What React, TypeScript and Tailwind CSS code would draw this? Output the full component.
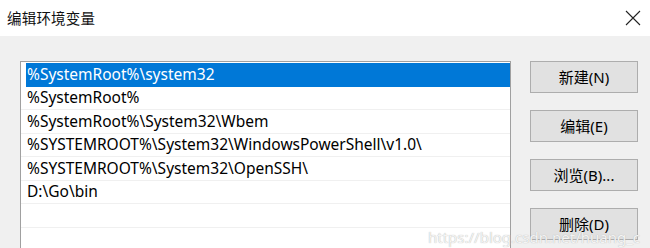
import { FC } from "react";

const paths = [
  "%SystemRoot%\\system32",
  "%SystemRoot%",
  "%SystemRoot%\\System32\\Wbem",
  "%SYSTEMROOT%\\System32\\WindowsPowerShell\\v1.0\\",
  "%SYSTEMROOT%\\System32\\OpenSSH\\",
  "D:\\Go\\bin",
  "",
  "",
];

const buttons = ["新建(N)", "编辑(E)", "浏览(B)...", "删除(D)"];

const font = { fontFamily: '"Noto Sans", "Noto Sans CJK SC", sans-serif' };

const DialogButton: FC<{ label: string }> = ({ label }) => (
  <button className="w-[108px] h-[32px] bg-[#e1e1e1] border border-[#adadad] text-[15px] text-black leading-none">
    {label}
  </button>
);

export default function App() {
  return (
    <div className="relative w-[650px] h-[248px] overflow-hidden bg-[#f0f0f0]" style={font}>
      {/* Title bar */}
      <div className="h-[36px] bg-white flex items-center justify-between pl-[7px] pr-[8px]">
        <span className="text-[14.5px] text-[#111] tracking-[0.2px]" style={{ fontFamily: '"Noto Sans CJK SC", sans-serif' }}>
          编辑环境变量
        </span>
        <svg width="16" height="16" viewBox="0 0 16 16" className="mr-[1px]">
          <path d="M1 1 L15 15 M15 1 L1 15" stroke="#222" strokeWidth="1.1" />
        </svg>
      </div>

      {/* Body */}
      <div className="flex pl-[20px] pt-[25px]">
        <div className="w-[491px] h-[200px] border border-b-0 border-[#a0a0a0] bg-white pt-[1px] pl-[5px]">
          {paths.map((p, i) => (
            <div
              key={i}
              className={
                i === 0
                  ? "h-[23.5px] bg-[#0078d7] text-white flex items-center pl-[1px] text-[15.5px] border-b border-[#0078d7]"
                  : "h-[23.5px] -ml-[5px] pl-[6px] border-b border-[#f0f0f0] text-black flex items-center text-[15.5px]"
              }
            >
              {p}
            </div>
          ))}
        </div>

        <div className="ml-[19px] flex flex-col gap-[17px]">
          {buttons.map((b) => (
            <DialogButton key={b} label={b} />
          ))}
        </div>
      </div>

      {/* watermark */}
      <div className="pointer-events-none absolute left-[428px] top-[226px] text-[15px] text-[#f4f4f4] [text-shadow:0_0_1px_#a8a8a8]">
        https://blog.csdn.net/huang_c
      </div>
    </div>
  );
}
